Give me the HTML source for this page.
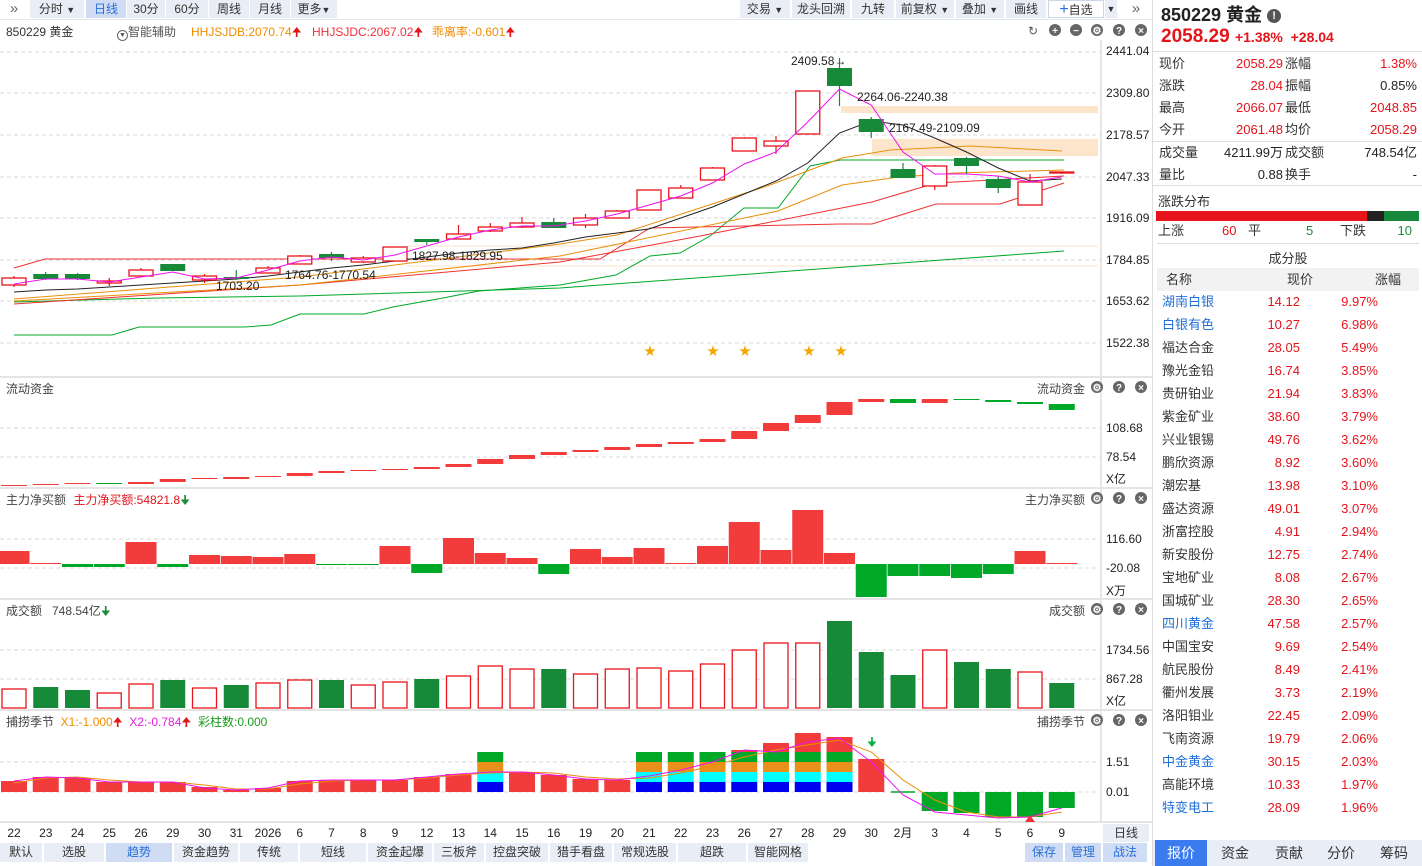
<!DOCTYPE html>
<html><head><meta charset="utf-8">
<style>
*{margin:0;padding:0;box-sizing:border-box}
body{width:1422px;height:866px;overflow:hidden;background:#fff;font-family:"Liberation Sans","Noto Sans CJK SC",sans-serif;font-size:12px;color:#333;position:relative}
.a{position:absolute;white-space:nowrap}
.btn{position:absolute;top:0;height:18px;background:#e9edf5;line-height:18px;text-align:center;font-size:12px;color:#333}
.rp{position:absolute;left:1152px;top:0;width:270px;height:866px;border-left:1px solid #ddd;background:#fff}
.r{color:#e4141b}.g{color:#1a8c3c}.b{color:#1f6fd6}
.row{position:absolute;left:6px;width:258px;height:22px;font-size:13px;line-height:22px}
.row span{position:absolute}
.tab{position:absolute;top:843px;height:19px;background:#e9edf5;line-height:19px;text-align:center;font-size:12px;color:#333}
</style></head><body>
<!-- toolbar -->
<div class="btn" style="left:0;width:28px;background:#fff;color:#666;font-size:15px">»</div>
<div class="btn" style="left:30px;width:54px">分时 <span style="font-size:9px">▼</span></div>
<div class="btn" style="left:86px;width:40px;background:#cfdcf3;color:#2a6fd6">日线</div>
<div class="btn" style="left:127px;width:38px">30分</div>
<div class="btn" style="left:166px;width:42px">60分</div>
<div class="btn" style="left:209px;width:40px">周线</div>
<div class="btn" style="left:250px;width:40px">月线</div>
<div class="btn" style="left:291px;width:46px">更多<span style="font-size:9px">▼</span></div>
<div class="btn" style="left:740px;width:50px">交易 <span style="font-size:9px">▼</span></div>
<div class="btn" style="left:792px;width:58px">龙头回溯</div>
<div class="btn" style="left:852px;width:42px">九转</div>
<div class="btn" style="left:896px;width:58px">前复权 <span style="font-size:9px">▼</span></div>
<div class="btn" style="left:956px;width:48px">叠加 <span style="font-size:9px">▼</span></div>
<div class="btn" style="left:1006px;width:40px">画线</div>
<div class="btn" style="left:1048px;width:56px;background:#fff;border:1px solid #cdd6e6"><span style="color:#2a6fd6;font-size:16px">+</span>自选</div>
<div class="btn" style="left:1105px;width:12px;font-size:9px">▼</div>
<div class="btn" style="left:1124px;width:24px;background:#fff;color:#666;font-size:15px">»</div>
<div class="a" style="left:0;top:19px;width:1152px;height:1px;background:#e3e6ec"></div>
<!-- main header -->
<div class="a" style="left:6px;top:23px">850229 黄金</div>
<div class="a" style="left:117px;top:23px;color:#555"><span style="display:inline-block;width:11px;height:11px;border:1px solid #666;border-radius:50%;font-size:7px;line-height:9px;text-align:center;vertical-align:-1px">▼</span>智能辅助</div>
<div class="a" style="left:191px;top:23px;color:#f08c00">HHJSJDB:2070.74<span class="r">🠉</span></div>
<div class="a" style="left:312px;top:23px;color:#f0303a">HHJSJDC:2067.02<span class="r">🠉</span></div>
<div class="a" style="left:432px;top:23px;color:#f08c00">乖离率:-0.601<span class="r">🠉</span></div>

<svg class="a" style="left:0;top:0" width="1152" height="866" id="ch" font-family="Liberation Sans, Noto Sans CJK SC, sans-serif" font-size="12"></svg>

<!-- panel headers -->
<div class="a" style="left:6px;top:380px;color:#444">流动资金</div>
<div class="a" style="left:1037px;top:380px;color:#444">流动资金</div>
<div class="a" style="left:6px;top:491px;color:#444">主力净买额 <span style="color:#e4141b;margin-left:4px">主力净买额:54821.8</span><span class="g">🠋</span></div>
<div class="a" style="left:1025px;top:491px;color:#444">主力净买额</div>
<div class="a" style="left:6px;top:602px;color:#444">成交额 &nbsp; 748.54亿<span class="g">🠋</span></div>
<div class="a" style="left:1049px;top:602px;color:#444">成交额</div>
<div class="a" style="left:6px;top:713px;color:#444">捕捞季节 &nbsp;<span style="color:#f08c00">X1:-1.000</span><span class="r">🠉</span> &nbsp;<span style="color:#e020e0">X2:-0.784</span><span class="r">🠉</span> &nbsp;<span style="color:#1a9c1a">彩柱数:0.000</span></div>
<div class="a" style="left:1037px;top:713px;color:#444">捕捞季节</div>

<!-- bottom -->
<div class="a" style="left:1103px;top:824px;width:46px;height:18px;background:#e9edf5;text-align:center;line-height:18px">日线</div>
<div class="tab" style="left:0;width:42px">默认</div>
<div class="tab" style="left:44px;width:60px">选股</div>
<div class="tab" style="left:106px;width:66px;background:#cfdcf3;color:#2a6fd6">趋势</div>
<div class="tab" style="left:174px;width:64px">资金趋势</div>
<div class="tab" style="left:240px;width:58px">传统</div>
<div class="tab" style="left:300px;width:66px">短线</div>
<div class="tab" style="left:368px;width:64px">资金起爆</div>
<div class="tab" style="left:434px;width:50px">三板斧</div>
<div class="tab" style="left:486px;width:62px">控盘突破</div>
<div class="tab" style="left:550px;width:62px">猎手看盘</div>
<div class="tab" style="left:614px;width:62px">常规选股</div>
<div class="tab" style="left:678px;width:68px">超跌</div>
<div class="tab" style="left:748px;width:60px">智能网格</div>
<div class="tab" style="left:1025px;width:38px;background:#cfdcf3;color:#2a6fd6">保存</div>
<div class="tab" style="left:1065px;width:36px;background:#cfdcf3;color:#2a6fd6">管理</div>
<div class="tab" style="left:1103px;width:44px;background:#cfdcf3;color:#2a6fd6">战法</div>

<!-- right panel -->
<div class="rp">
<div class="a" style="left:8px;top:1px;font-size:18px;font-weight:bold;color:#222">850229 黄金 <span style="display:inline-block;width:14px;height:14px;border-radius:50%;background:#555;color:#fff;font-size:11px;line-height:14px;text-align:center;vertical-align:2px">!</span></div>
<div class="a r" style="left:8px;top:26px;font-size:19px;font-weight:bold">2058.29 <span style="font-size:14px">+1.38% &nbsp;+28.04</span></div>
<div class="a" style="left:0;top:51px;width:270px;height:1px;background:#ddd"></div>
<div class="row" style="top:53px"><span style="left:0">现价</span><span class="r" style="right:134px">2058.29</span><span style="left:126px">涨幅</span><span class="r" style="right:0">1.38%</span></div>
<div class="row" style="top:75px"><span style="left:0">涨跌</span><span class="r" style="right:134px">28.04</span><span style="left:126px">振幅</span><span style="right:0;color:#222">0.85%</span></div>
<div class="row" style="top:97px"><span style="left:0">最高</span><span class="r" style="right:134px">2066.07</span><span style="left:126px">最低</span><span class="r" style="right:0">2048.85</span></div>
<div class="row" style="top:119px"><span style="left:0">今开</span><span class="r" style="right:134px">2061.48</span><span style="left:126px">均价</span><span class="r" style="right:0">2058.29</span></div>
<div class="a" style="left:0;top:141px;width:270px;height:1px;background:#ddd"></div>
<div class="row" style="top:142px"><span style="left:0">成交量</span><span style="right:134px;color:#222">4211.99万</span><span style="left:126px">成交额</span><span style="right:0;color:#222">748.54亿</span></div>
<div class="row" style="top:164px"><span style="left:0">量比</span><span style="right:134px;color:#222">0.88</span><span style="left:126px">换手</span><span style="right:0;color:#222">-</span></div>
<div class="a" style="left:0;top:185px;width:270px;height:1px;background:#ddd"></div>
<div class="a" style="left:5px;top:191px;font-size:13px">涨跌分布</div>
<div class="a" style="left:3px;top:211px;width:211px;height:10px;background:#e8141b"></div>
<div class="a" style="left:214px;top:211px;width:17px;height:10px;background:#222"></div>
<div class="a" style="left:231px;top:211px;width:35px;height:10px;background:#15883a"></div>
<div class="row" style="top:220px;left:5px"><span style="left:0">上涨</span><span class="r" style="left:64px">60</span><span style="left:90px">平</span><span class="g" style="left:148px">5</span><span style="left:182px">下跌</span><span class="g" style="right:4px">10</span></div>
<div class="a" style="left:4px;top:243px;width:262px;height:1px;background:#ddd"></div>
<div class="a" style="left:0;top:248px;width:270px;text-align:center;font-size:13px">成分股</div>
<div class="a" style="left:4px;top:268px;width:262px;height:23px;background:#f2f2f2;font-size:13px;line-height:23px"><span class="a" style="left:9px">名称</span><span class="a" style="left:130px">现价</span><span class="a" style="left:218px">涨幅</span></div>
<div id="stk"></div>
<div class="a" style="left:0;top:840px;width:270px;height:26px;background:#e9edf5"></div>
<div class="a" style="left:2px;top:840px;width:52px;height:26px;background:#3a7bf0;color:#fff;text-align:center;line-height:26px;font-size:14px">报价</div>
<div class="a" style="left:56px;top:840px;width:52px;text-align:center;line-height:26px;font-size:14px">资金</div>
<div class="a" style="left:110px;top:840px;width:52px;text-align:center;line-height:26px;font-size:14px">贡献</div>
<div class="a" style="left:162px;top:840px;width:52px;text-align:center;line-height:26px;font-size:14px">分价</div>
<div class="a" style="left:214px;top:840px;width:54px;text-align:center;line-height:26px;font-size:14px">筹码</div>
</div>

<div class="rp" style="background:none;border:none;pointer-events:none">
<div class="row" style="top:291px;left:10px"><span class="b" style="left:0">湖南白银</span><span class="r" style="right:120px">14.12</span><span class="r" style="right:42px">9.97%</span></div>
<div class="row" style="top:314px;left:10px"><span class="b" style="left:0">白银有色</span><span class="r" style="right:120px">10.27</span><span class="r" style="right:42px">6.98%</span></div>
<div class="row" style="top:337px;left:10px"><span style="left:0">福达合金</span><span class="r" style="right:120px">28.05</span><span class="r" style="right:42px">5.49%</span></div>
<div class="row" style="top:360px;left:10px"><span style="left:0">豫光金铅</span><span class="r" style="right:120px">16.74</span><span class="r" style="right:42px">3.85%</span></div>
<div class="row" style="top:383px;left:10px"><span style="left:0">贵研铂业</span><span class="r" style="right:120px">21.94</span><span class="r" style="right:42px">3.83%</span></div>
<div class="row" style="top:406px;left:10px"><span style="left:0">紫金矿业</span><span class="r" style="right:120px">38.60</span><span class="r" style="right:42px">3.79%</span></div>
<div class="row" style="top:429px;left:10px"><span style="left:0">兴业银锡</span><span class="r" style="right:120px">49.76</span><span class="r" style="right:42px">3.62%</span></div>
<div class="row" style="top:452px;left:10px"><span style="left:0">鹏欣资源</span><span class="r" style="right:120px">8.92</span><span class="r" style="right:42px">3.60%</span></div>
<div class="row" style="top:475px;left:10px"><span style="left:0">潮宏基</span><span class="r" style="right:120px">13.98</span><span class="r" style="right:42px">3.10%</span></div>
<div class="row" style="top:498px;left:10px"><span style="left:0">盛达资源</span><span class="r" style="right:120px">49.01</span><span class="r" style="right:42px">3.07%</span></div>
<div class="row" style="top:521px;left:10px"><span style="left:0">浙富控股</span><span class="r" style="right:120px">4.91</span><span class="r" style="right:42px">2.94%</span></div>
<div class="row" style="top:544px;left:10px"><span style="left:0">新安股份</span><span class="r" style="right:120px">12.75</span><span class="r" style="right:42px">2.74%</span></div>
<div class="row" style="top:567px;left:10px"><span style="left:0">宝地矿业</span><span class="r" style="right:120px">8.08</span><span class="r" style="right:42px">2.67%</span></div>
<div class="row" style="top:590px;left:10px"><span style="left:0">国城矿业</span><span class="r" style="right:120px">28.30</span><span class="r" style="right:42px">2.65%</span></div>
<div class="row" style="top:613px;left:10px"><span class="b" style="left:0">四川黄金</span><span class="r" style="right:120px">47.58</span><span class="r" style="right:42px">2.57%</span></div>
<div class="row" style="top:636px;left:10px"><span style="left:0">中国宝安</span><span class="r" style="right:120px">9.69</span><span class="r" style="right:42px">2.54%</span></div>
<div class="row" style="top:659px;left:10px"><span style="left:0">航民股份</span><span class="r" style="right:120px">8.49</span><span class="r" style="right:42px">2.41%</span></div>
<div class="row" style="top:682px;left:10px"><span style="left:0">衢州发展</span><span class="r" style="right:120px">3.73</span><span class="r" style="right:42px">2.19%</span></div>
<div class="row" style="top:705px;left:10px"><span style="left:0">洛阳钼业</span><span class="r" style="right:120px">22.45</span><span class="r" style="right:42px">2.09%</span></div>
<div class="row" style="top:728px;left:10px"><span style="left:0">飞南资源</span><span class="r" style="right:120px">19.79</span><span class="r" style="right:42px">2.06%</span></div>
<div class="row" style="top:751px;left:10px"><span class="b" style="left:0">中金黄金</span><span class="r" style="right:120px">30.15</span><span class="r" style="right:42px">2.03%</span></div>
<div class="row" style="top:774px;left:10px"><span style="left:0">高能环境</span><span class="r" style="right:120px">10.33</span><span class="r" style="right:42px">1.97%</span></div>
<div class="row" style="top:797px;left:10px"><span class="b" style="left:0">特变电工</span><span class="r" style="right:120px">28.09</span><span class="r" style="right:42px">1.96%</span></div>
</div>

<script>
var s=document.getElementById('ch'),h='';
var R='#f23c3c',G='#178a3a',GB='#00a828',X=function(i){return 14+31.75*i};
function L(x1,y1,x2,y2,c,w,d){h+='<line x1="'+x1+'" y1="'+y1+'" x2="'+x2+'" y2="'+y2+'" stroke="'+c+'" stroke-width="'+(w||1)+'"'+(d?' stroke-dasharray="4 3"':'')+'/>'}
function Rc(x,y,w,hh,f,st){h+='<rect x="'+x+'" y="'+y+'" width="'+w+'" height="'+Math.max(hh,1)+'" fill="'+f+'"'+(st?' stroke="'+st+'" stroke-width="1.3"':'')+'/>'}
function T(x,y,t,c,a){h+='<text x="'+x+'" y="'+y+'" fill="'+(c||'#333')+'"'+(a?' text-anchor="'+a+'"':'')+'>'+t+'</text>'}
function P(pts,c,w){var d=pts.map(function(p){return p[0]+','+p[1]}).join(' ');h+='<polyline points="'+d+'" fill="none" stroke="'+c+'" stroke-width="'+(w||1)+'"/>'}
function PI(arr,c,w){P(arr.map(function(y,i){return [X(i),y]}),c,w)}
// grids
[52,93,135,177,218,260,301,343,428,457,539,568,650,679,762,792].forEach(function(y){L(0,y,1100,y,'#d8d8d8',1,1)});
[[51,'2441.04'],[93,'2309.80'],[135,'2178.57'],[177,'2047.33'],[218,'1916.09'],[260,'1784.85'],[301,'1653.62'],[343,'1522.38'],[428,'108.68'],[457,'78.54'],[539,'116.60'],[568,'-20.08'],[650,'1734.56'],[679,'867.28'],[762,'1.51'],[792,'0.01']].forEach(function(a){T(1106,a[0]+4,a[1],'#222')});
T(1106,483,'X亿','#222');T(1106,595,'X万','#222');T(1106,705,'X亿','#222');
L(1101,40,1101,822,'#ccc');
[377,488,599,710,822].forEach(function(y){L(0,y,1152,y,'#e4e4e4',2)});
// zones
Rc(841,106,257,7,'#fde5cc');Rc(872,139,226,17,'#fde5cc');
L(407,246,1098,246,'#fbe3cc');L(407,266,1098,266,'#fbe3cc');
// lines main
P([[14,302],[157,298],[300,296],[560,288],[1064,251]],GB);
P([[14,335],[112,335],[139,327],[245,327],[271,325],[300,314],[364,314],[393,307],[443,298],[479,291],[560,285],[616,275],[650,256],[680,253],[710,236],[744,208],[778,208],[810,166],[840,160],[1064,160]],GB);
P([[14,268],[45,259],[600,259],[650,228],[840,224],[872,224],[936,204],[1000,204],[1064,183]],'#f03030');
P([[14,304],[300,285],[560,262],[700,236],[872,202],[936,183],[1064,176]],'#f03030');
P([[14,301],[300,285],[560,256],[778,211],[842,185],[899,177],[955,173],[1064,170]],'#e8900a');
P([[14,299],[300,277],[560,244],[617,235],[700,208],[770,185],[842,158],[890,150],[970,146],[1062,151]],'#e8900a');
PI([292,290,289,287,285,283,281,279,276,272,268,265,261,257,253,250,248,243,237,233,229,218,207,194,181,163,133,121,125,138,152,168,181,179],'#222');
// candles [type,top,bot,wt,wb]
var C=[[1,278,285,276,287],[0,274,279,272,280],[0,274,279,273,280],[1,281,283,278,286],[1,270,276,268,277],[0,264,271,264,271],[1,276,280,274,283],[0,277,279,270,280],[1,268,273,266,273],[1,256,264,255,264],[0,254,258,252,261],[1,258,262,256,263],[1,247,261,247,261],[0,239,242,239,245],[1,234,239,225,239],[1,227,231,223,232],[1,223,227,217,228],[0,222,228,218,228],[1,218,225,214,228],[1,211,218,210,218],[1,190,210,190,210],[1,188,198,185,198],[1,168,180,167,180],[1,138,151,137,151],[1,141,146,136,154],[1,91,134,91,134],[0,68,86,58,106],[0,119,132,117,138],[0,169,178,163,178],[1,166,186,165,190],[0,158,166,157,174],[0,179,188,176,193],[1,182,205,174,205],[1,172,173,172,174]];
C.forEach(function(c,i){var x=X(i),col=c[0]?'#e8141b':G;L(x,c[3],x,c[4],col,1.2);if(c[0])Rc(x-12,c[1],24,c[2]-c[1],'#fff',col);else Rc(x-12.5,c[1],25,c[2]-c[1],col)});
PI([284,279,279,282,277,272,279,278,270,261,257,260,255,246,237,230,226,226,221,214,205,196,183,164,152,122,89,105,152,174,174,176,182,177],'#f010f0');
T(791,65,'2409.58→','#222');T(857,101,'2264.06-2240.38','#222');T(889,132,'2167.49-2109.09','#222');T(412,260,'1827.98-1829.95','#222');T(285,279,'1764.76-1770.54','#222');T(216,290,'1703.20','#222');
[650,713,745,809,841].forEach(function(x){T(x,355,'★','#f5a700','middle')});
// panel2
var F=[[485,486,1],[484,485,1],[483,484,1],[483,484,0],[482,484,1],[479,482,1],[478,479,1],[477,479,1],[476,477,1],[473,476,1],[471,473,1],[470,471,1],[469,470,1],[467,469,1],[464,467,1],[459,464,1],[455,459,1],[452,455,1],[450,452,1],[447,450,1],[444,447,1],[442,444,1],[439,442,1],[431,439,1],[423,431,1],[415,423,1],[402,415,1],[399,402,1],[399,403,0],[399,403,1],[399,400,0],[400,402,0],[402,404,0],[404,410,0]];
F.forEach(function(f,i){Rc(X(i)-13,f[0],26,f[1]-f[0],f[2]?R:GB)});
// panel3
var M=[551,563,-567,-567,542,-567,555,556,557,554,-565,-565,546,-573,538,553,558,-574,549,557,548,563,546,522,550,510,553,-597,-576,-576,-578,-574,551,563];
M.forEach(function(v,i){if(v>0)Rc(X(i)-15.5,v,31,564-v,R);else Rc(X(i)-15.5,564,31,-v-564,GB)});
// panel4
var V=[689,-687,-690,693,684,-680,688,-685,683,680,-680,685,682,-679,676,666,669,-669,674,669,668,671,664,650,643,643,-621,-652,-675,650,-662,-669,672,-683];
V.forEach(function(v,i){if(v>0)Rc(X(i)-12,v,24,708-v,'#fff','#e8141b');else Rc(X(i)-12.5,-v,25,708+v,G)});
// panel5
var B=[781,777,778,782,782,782,787,790,788,781,780,780,780,777,774,'s',772,775,779,780,'s','s','s','s','s','s','s',759];
B.forEach(function(v,i){var x=X(i)-13;if(v==='s'){Rc(x,782,26,10,'#0000f0');Rc(x,772,26,10,'#00ffff');Rc(x,762,26,10,'#e8901a');Rc(x,752,26,10,'#00a828');var t={23:750,24:743,25:733,26:737}[i];if(t)Rc(x,t,26,752-t,R)}else Rc(x,v,26,792-v,R)});
L(X(28)-12,792,X(28)+12,792,GB,1.5);
[811,813,817,817,808].forEach(function(v,i){Rc(X(29+i)-13,792,26,v-792,GB)});
PI([783,778,777,780,782,782,785,789,789,784,781,780,780,778,775,773,772,773,777,779,778,773,766,757,750,745,740,752,780,800,812,817,817,812],'#e8900a');
PI([781,777,778,782,782,782,788,790,788,781,780,780,780,777,774,772,772,775,779,780,776,770,762,750,752,742,738,762,795,812,815,818,817,808],'#f010f0');
T(872,746,'🠋','#00b040','middle');h+='<polygon points="1025,822 1030,815 1035,822" fill="#f03040"/>';
// icons
function ic(x,y,t){h+='<circle cx="'+x+'" cy="'+y+'" r="6" fill="#666"/><text x="'+x+'" y="'+(y+4)+'" fill="#fff" font-size="10" font-weight="bold" text-anchor="middle">'+t+'</text>'}
[[30],[387],[498],[609],[720]].forEach(function(a){var y=a[0];ic(1097,y,'⚙');ic(1119,y,'?');ic(1141,y,'×')});
ic(1055,30,'+');ic(1076,30,'−');T(1033,35,'↻','#555','middle');
// dates
['22','23','24','25','26','29','30','31','2026','6','7','8','9','12','13','14','15','16','19','20','21','22','23','26','27','28','29','30','2月','3','4','5','6','9'].forEach(function(d,i){T(X(i),837,d,'#222','middle')});
s.innerHTML=h;
</script>
</body></html>
